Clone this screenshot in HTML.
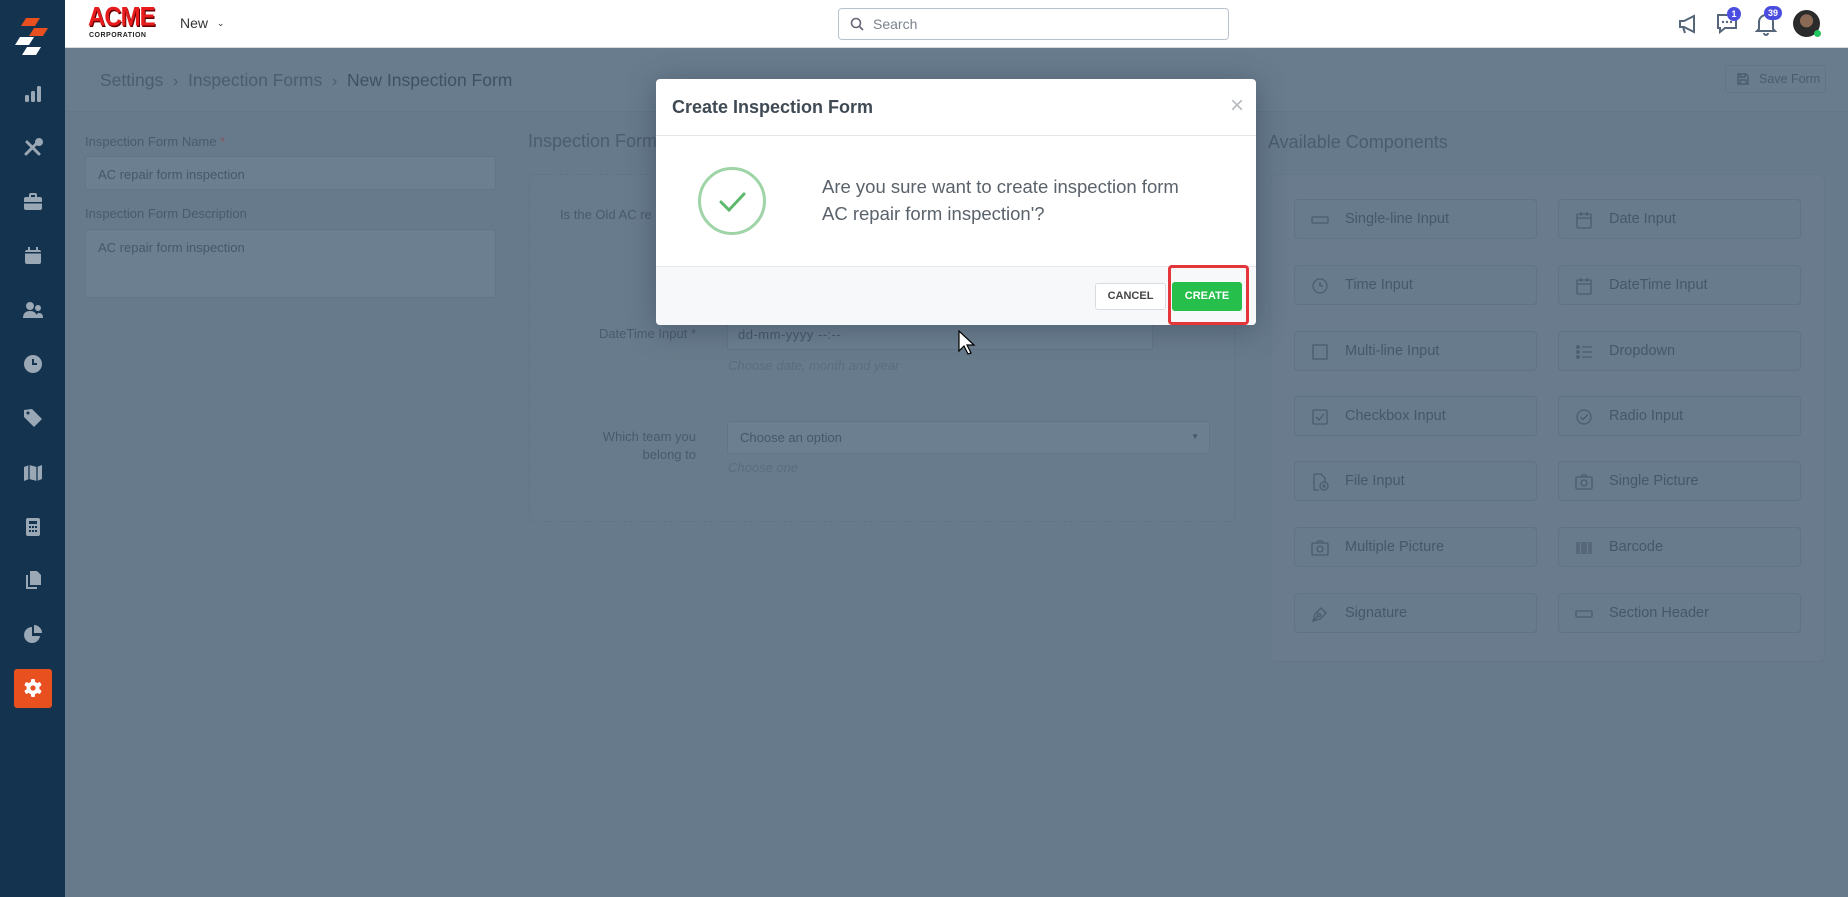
<!DOCTYPE html>
<html><head><meta charset="utf-8"><style>
*{box-sizing:border-box;margin:0;padding:0}
body{width:1848px;height:897px;overflow:hidden;font-family:"Liberation Sans",sans-serif;background:#677a8b;position:relative}
.a{position:absolute}
.side{left:0;top:0;width:65px;height:897px;background:#14334e}
.hdr{left:65px;top:0;right:0;height:48px;background:#fff;border-bottom:1px solid #d6dbe0}
.si{position:absolute;left:22px;width:22px;height:22px}
.t{color:#485a6c}
.inp{background:#6c7f90;border:1px solid #61748a;border-radius:3px}
.comp{position:absolute;width:243px;height:40px;border:1px solid #5f7286;border-radius:4px;background:#687b8c;color:#45576a;font-size:14.5px;line-height:38px;padding-left:50px}
.comp svg{position:absolute;left:16px;top:11px}
</style></head><body>

<div class="a side">
 <svg class="a" style="left:14px;top:16px" width="36" height="40" viewBox="0 0 36 40">
  <polygon points="12,2 26,2 21,10 7,10" fill="#e8501f"/>
  <polygon points="20,12 34,12 29,20 15,20" fill="#e8501f"/>
  <polygon points="6,21 20,21 15,29 1,29" fill="#fff"/>
  <polygon points="13,31 27,31 22,39 8,39" fill="#fff"/>
 </svg>
 <svg class="si" style="top:83px" viewBox="0 0 22 22" fill="#9aa7b4"><rect x="3" y="12" width="4" height="7" rx="1.5"/><rect x="9" y="8" width="4" height="11" rx="1.5"/><rect x="15" y="3" width="4" height="16" rx="1.5"/></svg>
 <svg class="si" style="top:137px" viewBox="0 0 22 22" stroke="#9aa7b4" stroke-width="3" stroke-linecap="round" fill="none"><path d="M5 5l12 12M17 4L4 17"/><circle cx="17" cy="5" r="2.5" fill="#9aa7b4"/></svg>
 <svg class="si" style="top:191px" viewBox="0 0 22 22" fill="#9aa7b4"><rect x="2" y="6" width="18" height="13" rx="2"/><rect x="8" y="3" width="6" height="4" rx="1" fill="none" stroke="#9aa7b4" stroke-width="2"/><rect x="2" y="11" width="18" height="1.5" fill="#14334e"/></svg>
 <svg class="si" style="top:245px" viewBox="0 0 22 22" fill="#9aa7b4"><rect x="3" y="5" width="16" height="14" rx="2"/><rect x="6" y="2" width="2" height="5"/><rect x="14" y="2" width="2" height="5"/><rect x="3" y="7" width="16" height="1.5" fill="#14334e"/></svg>
 <svg class="si" style="top:299px" viewBox="0 0 22 22" fill="#9aa7b4"><circle cx="8" cy="7" r="4"/><circle cx="16" cy="9" r="3"/><path d="M1 19c0-5 3-7 7-7s7 2 7 7z"/><path d="M14 19c0-3 1-5 3-5 3 0 4 2 4 5z"/></svg>
 <svg class="si" style="top:353px" viewBox="0 0 22 22"><circle cx="11" cy="11" r="9" fill="#9aa7b4"/><path d="M11 6v5h4" stroke="#14334e" stroke-width="2" fill="none"/></svg>
 <svg class="si" style="top:407px" viewBox="0 0 22 22" fill="#9aa7b4"><path d="M2 3l0 7 10 10 8-8L10 2z"/><circle cx="6" cy="6" r="1.5" fill="#14334e"/></svg>
 <svg class="si" style="top:462px" viewBox="0 0 22 22" fill="#9aa7b4"><path d="M2 5l5-2 8 2 5-2v14l-5 2-8-2-5 2z"/><path d="M7 3v14M15 5v14" stroke="#14334e" stroke-width="1.3"/></svg>
 <svg class="si" style="top:516px" viewBox="0 0 22 22" fill="#9aa7b4"><rect x="4" y="2" width="14" height="18" rx="2"/><rect x="7" y="5" width="8" height="3" fill="#14334e"/><g fill="#14334e"><rect x="7" y="10" width="2" height="2"/><rect x="10" y="10" width="2" height="2"/><rect x="13" y="10" width="2" height="2"/><rect x="7" y="14" width="2" height="2"/><rect x="10" y="14" width="2" height="2"/><rect x="13" y="14" width="2" height="2"/></g></svg>
 <svg class="si" style="top:569px" viewBox="0 0 22 22" fill="#9aa7b4"><path d="M8 2h7l4 4v10H8z"/><path d="M4 6h2v12h9v2H4z"/></svg>
 <svg class="si" style="top:623px" viewBox="0 0 22 22" fill="#9aa7b4"><path d="M10 4a8 8 0 1 0 8 9h-8z"/><path d="M12 2a8 8 0 0 1 8 8h-8z"/></svg>
 <div class="a" style="left:14px;top:669px;width:38px;height:39px;background:#e8501f;border-radius:3px"></div>
 <svg class="a" style="left:23px;top:678px" width="20" height="20" viewBox="0 0 20 20"><g fill="#fff"><circle cx="10" cy="10" r="6.5"/><rect x="8" y="1" width="4" height="18" rx="1"/><rect x="8" y="1" width="4" height="18" rx="1" transform="rotate(60 10 10)"/><rect x="8" y="1" width="4" height="18" rx="1" transform="rotate(120 10 10)"/></g><circle cx="10" cy="10" r="2.6" fill="#e8501f"/></svg>
</div>

<div class="a hdr">
 <div class="a" style="left:23px;top:6px;font:900 24px/24px 'Liberation Sans',sans-serif;color:#e81c1c;letter-spacing:-1px;transform:scaleY(1.1);text-shadow:1px 1px 0 #600">ACME</div>
 <div class="a" style="left:24px;top:32px;font:bold 7px 'Liberation Sans',sans-serif;color:#222;letter-spacing:0.5px">CORPORATION</div>
 <div class="a" style="left:115px;top:15px;font-size:14px;color:#333">New <span style="font-size:9px;margin-left:5px;position:relative;top:-2px">&#8964;</span></div>
 <div class="a" style="left:773px;top:8px;width:391px;height:32px;border:1px solid #b9c2cc;border-radius:4px">
  <svg class="a" style="left:11px;top:8px" width="14" height="14" viewBox="0 0 14 14" fill="none" stroke="#667" stroke-width="1.6"><circle cx="6" cy="6" r="4.5"/><path d="M9.5 9.5L13 13"/></svg>
  <span class="a" style="left:34px;top:7px;font-size:14px;color:#7a828c">Search</span>
 </div>
 <svg class="a" style="left:1612px;top:12px" width="22" height="24" viewBox="0 0 22 24" fill="none" stroke="#55667a" stroke-width="2"><path d="M3 9h4l10-5v16L7 15H3z"/><path d="M6 15l2 6"/></svg>
 <svg class="a" style="left:1651px;top:12px" width="22" height="22" viewBox="0 0 22 22" fill="none" stroke="#55667a" stroke-width="2"><path d="M2 3h18v13H9l-5 4v-4H2z"/><g fill="#55667a" stroke="none"><circle cx="7" cy="10" r="1.2"/><circle cx="11" cy="10" r="1.2"/><circle cx="15" cy="10" r="1.2"/></g></svg>
 <div class="a" style="left:1662px;top:7px;width:14px;height:14px;border-radius:7px;background:#4b4de0;color:#fff;font:bold 9px/14px sans-serif;text-align:center">1</div>
 <svg class="a" style="left:1690px;top:12px" width="22" height="24" viewBox="0 0 22 24" fill="none" stroke="#55667a" stroke-width="2"><path d="M4 17V10a7 7 0 0 1 14 0v7l2 2H2z"/><path d="M9 21a2 2 0 0 0 4 0"/></svg>
 <div class="a" style="left:1699px;top:6px;width:18px;height:14px;border-radius:7px;background:#4b4de0;color:#fff;font:bold 9px/14px sans-serif;text-align:center">39</div>
 <div class="a" style="left:1728px;top:10px;width:27px;height:27px;border-radius:50%;background:radial-gradient(circle at 50% 40%,#8a6a55 0 30%,#2b2b2b 32%)"></div>
 <div class="a" style="left:1749px;top:30px;width:7px;height:7px;border-radius:50%;background:#22c55e"></div>
</div>

<div class="a" style="left:65px;top:48px;right:0;height:64px;background:#697c8d;border-bottom:1px solid #63768a"></div>
<div class="a t" style="left:100px;top:70px;font-size:17.5px;color:#4a5c6e">Settings &nbsp;<span style="font-size:16px">›</span>&nbsp; Inspection Forms &nbsp;<span style="font-size:16px">›</span>&nbsp; <span style="color:#3f5064">New Inspection Form</span></div>
<div class="a" style="left:1725px;top:65px;width:101px;height:28px;border:1px solid #61748a;border-radius:3px;font-size:12.5px;color:#4a5c6e;line-height:26px;padding-left:33px">Save Form
 <svg class="a" style="left:11px;top:7px" width="12" height="12" viewBox="0 0 12 12" fill="none" stroke="#4a5c6e" stroke-width="1.4"><path d="M1 1h8l2 2v8H1z"/><path d="M3 1v3h5V1M3 11V7h6v4"/></svg></div>

<div class="a t" style="left:85px;top:134px;font-size:13px">Inspection Form Name <span style="color:#8a5560">*</span></div>
<div class="a inp" style="left:85px;top:156px;width:411px;height:34px;font-size:13px;color:#45576a;padding:10px 12px">AC repair form inspection</div>
<div class="a t" style="left:85px;top:206px;font-size:13px">Inspection Form Description</div>
<div class="a inp" style="left:85px;top:229px;width:411px;height:69px;font-size:13px;color:#45576a;padding:10px 12px">AC repair form inspection</div>

<div class="a" style="left:528px;top:131px;font-size:18px;color:#4a5c6e">Inspection Form</div>
<div class="a" style="left:529px;top:174px;width:706px;height:348px;border:1px dashed #5f7286;border-radius:6px;background:#687b8c"></div>
<div class="a t" style="left:560px;top:207px;font-size:13px">Is the Old AC re</div>
<div class="a t" style="left:580px;top:326px;width:116px;text-align:right;font-size:13px">DateTime Input *</div>
<div class="a inp" style="left:727px;top:318px;width:426px;height:32px;font-size:13px;color:#45576a;padding:8px 10px;letter-spacing:0.5px">dd-mm-yyyy --:--</div>
<div class="a" style="left:728px;top:358px;font-size:13px;font-style:italic;color:#5a6c7e">Choose date, month and year</div>
<div class="a t" style="left:580px;top:428px;width:116px;text-align:right;font-size:13px;line-height:18px">Which team you belong to</div>
<div class="a inp" style="left:727px;top:421px;width:483px;height:33px;font-size:13px;color:#45576a;padding:8px 12px">Choose an option<span class="a" style="right:10px;top:10px;font-size:8px">&#9660;</span></div>
<div class="a" style="left:728px;top:460px;font-size:13px;font-style:italic;color:#5a6c7e">Choose one</div>

<div class="a" style="left:1268px;top:132px;font-size:18px;color:#4a5c6e">Available Components</div>
<div class="a" style="left:1270px;top:174px;width:555px;height:488px;border:1px solid #63768a;border-radius:6px;background:#697b8c"></div>

<div class="comp" style="left:1294px;top:199px"><svg width="18" height="18" viewBox="0 0 18 18" fill="none" stroke="#4a5c6e" stroke-width="1.3"><rect x="1" y="6" width="16" height="6" rx="1"/></svg>Single-line Input</div>
<div class="comp" style="left:1558px;top:199px"><svg width="18" height="18" viewBox="0 0 18 18" fill="none" stroke="#4a5c6e" stroke-width="1.3"><rect x="2" y="3" width="14" height="14" rx="1"/><path d="M2 7h14M6 1v4M12 1v4"/></svg>Date Input</div>
<div class="comp" style="left:1294px;top:265px"><svg width="18" height="18" viewBox="0 0 18 18" fill="none" stroke="#4a5c6e" stroke-width="1.3"><circle cx="9" cy="9" r="7"/><path d="M9 5v4h3"/></svg>Time Input</div>
<div class="comp" style="left:1558px;top:265px"><svg width="18" height="18" viewBox="0 0 18 18" fill="none" stroke="#4a5c6e" stroke-width="1.3"><rect x="2" y="3" width="14" height="14" rx="1"/><path d="M2 7h14M6 1v4M12 1v4"/></svg>DateTime Input</div>
<div class="comp" style="left:1294px;top:331px"><svg width="18" height="18" viewBox="0 0 18 18" fill="none" stroke="#4a5c6e" stroke-width="1.3"><rect x="2" y="2" width="14" height="14"/></svg>Multi-line Input</div>
<div class="comp" style="left:1558px;top:331px"><svg width="18" height="18" viewBox="0 0 18 18" fill="none" stroke="#4a5c6e" stroke-width="1.3"><path d="M7 4h10M7 9h10M7 14h10"/><rect x="2" y="3" width="2" height="2" fill="#4a5c6e"/><rect x="2" y="8" width="2" height="2" fill="#4a5c6e"/><rect x="2" y="13" width="2" height="2" fill="#4a5c6e"/></svg>Dropdown</div>
<div class="comp" style="left:1294px;top:396px"><svg width="18" height="18" viewBox="0 0 18 18" fill="none" stroke="#4a5c6e" stroke-width="1.3"><rect x="2" y="2" width="14" height="14" rx="1"/><path d="M5 9l3 3 5-6"/></svg>Checkbox Input</div>
<div class="comp" style="left:1558px;top:396px"><svg width="18" height="18" viewBox="0 0 18 18" fill="none" stroke="#4a5c6e" stroke-width="1.3"><circle cx="9" cy="9" r="7"/><path d="M5.5 9l2.5 2.5 5-5"/></svg>Radio Input</div>
<div class="comp" style="left:1294px;top:461px"><svg width="18" height="18" viewBox="0 0 18 18" fill="none" stroke="#4a5c6e" stroke-width="1.3"><path d="M3 1h7l4 4v5M8 17H3V1"/><circle cx="13" cy="13" r="4"/><path d="M13 11v4M11 13h4"/></svg>File Input</div>
<div class="comp" style="left:1558px;top:461px"><svg width="18" height="18" viewBox="0 0 18 18" fill="none" stroke="#4a5c6e" stroke-width="1.3"><rect x="1" y="4" width="16" height="12" rx="1"/><circle cx="9" cy="10" r="3"/><path d="M6 4l1-2h4l1 2"/></svg>Single Picture</div>
<div class="comp" style="left:1294px;top:527px"><svg width="18" height="18" viewBox="0 0 18 18" fill="none" stroke="#4a5c6e" stroke-width="1.3"><rect x="1" y="4" width="16" height="12" rx="1"/><circle cx="9" cy="10" r="3"/><path d="M6 4l1-2h4l1 2"/></svg>Multiple Picture</div>
<div class="comp" style="left:1558px;top:527px"><svg width="18" height="18" viewBox="0 0 18 18" stroke="#4a5c6e"><path d="M2 3v12M4 3v12M7 3v12M9 3v12M11 3v12M14 3v12M16 3v12" stroke-width="1.2"/></svg>Barcode</div>
<div class="comp" style="left:1294px;top:593px"><svg width="18" height="18" viewBox="0 0 18 18" fill="none" stroke="#4a5c6e" stroke-width="1.3"><path d="M2 16l2-7 6-6 5 5-6 6z"/><circle cx="8" cy="10" r="1.5"/><path d="M2 16l5-5"/></svg>Signature</div>
<div class="comp" style="left:1558px;top:593px"><svg width="18" height="18" viewBox="0 0 18 18" fill="none" stroke="#4a5c6e" stroke-width="1.3"><rect x="1" y="6" width="16" height="6" rx="1"/></svg>Section Header</div>

<div class="a" style="left:656px;top:79px;width:600px;height:246px;background:#fff;border-radius:4px;box-shadow:0 4px 30px rgba(40,55,70,.45);overflow:hidden">
 <div class="a" style="left:16px;top:18px;font:bold 18px 'Liberation Sans',sans-serif;color:#3f4a55">Create Inspection Form</div>
 <div class="a" style="right:12px;top:13px;font-size:24px;color:#b8bcc0">&times;</div>
 <div class="a" style="left:0;top:56px;width:600px;height:1px;background:#e4e7ea"></div>
 <div class="a" style="left:42px;top:88px;width:68px;height:68px;border:3px solid #9ed4a6;border-radius:50%"></div>
 <svg class="a" style="left:62px;top:112px" width="28" height="22" viewBox="0 0 28 22" fill="none" stroke="#5cb86a" stroke-width="3" stroke-linecap="round"><path d="M3 11l8 8L26 3"/></svg>
 <div class="a" style="left:166px;top:94px;font-size:18.5px;line-height:27px;color:#5a626b;font-weight:300">Are you sure want to create inspection form<br>AC repair form inspection'?</div>
 <div class="a" style="left:0;top:187px;width:600px;height:59px;background:#f7f8f9;border-top:1px solid #e4e7ea"></div>
 <div class="a" style="left:439px;top:204px;width:71px;height:27px;background:#fff;border:1px solid #d8dce0;border-radius:3px;font:bold 11px/25px 'Liberation Sans',sans-serif;color:#444;text-align:center">CANCEL</div>
 <div class="a" style="left:516px;top:203px;width:70px;height:29px;background:#26bf4c;border-radius:3px;font:bold 11px/29px 'Liberation Sans',sans-serif;color:#fff;text-align:center">CREATE</div>
</div>
<div class="a" style="left:1168px;top:265px;width:81px;height:60px;border:3px solid #e3353a;border-radius:4px"></div>

<svg class="a" style="left:958px;top:330px" width="18" height="26" viewBox="0 0 18 26"><path d="M1 1v20l5-5 4 8 3-1-4-8h7z" fill="#fff" stroke="#000" stroke-width="1.2"/></svg>
</body></html>
